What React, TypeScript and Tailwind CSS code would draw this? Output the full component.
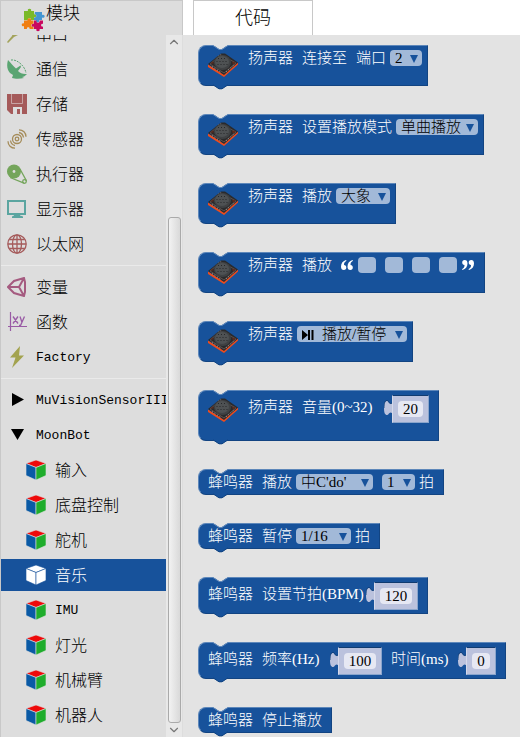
import type { ReactNode } from "react";
import { ChevronDown, ChevronUp } from "lucide-react";

function PuzzleLogo() {
  return (
    <svg className="size-6 shrink-0" viewBox="0 0 24 24" aria-hidden="true">
      <path fill="#7ab929" d="M3 3h4c-1.500-3 4.500-3 3 0h3v3.500c3-1.500 3 4 0 2.500V12h-3c1-2.500-4-2.500-3 0H3z" />
      <path fill="#4496d2" d="M14 4h7v3c3.500-1.500 3.500 4 0 2.500V12h-3c1.500 3-4.500 3-3 0h-2V9.500c3 1 3-4 .5-3z" />
      <path fill="#f07e12" d="M3 12.500h3.500c-1-3 4.500-3 3.500 0h2.500V16c-3-1.500-3 4 0 2.500V21H8.500c1-2.500-3.500-2.500-2.500 0H3v-3C0 19.500 0 14 3 15.500z" />
      <path fill="#c9085f" d="M13 12.500h2.500c-1 3 4 3 3 0H22V16c-2.500-1.500-2.500 3.500 0 2.500V21h-3.500c1.500 3-4.500 3-3 0H13v-2.500c-3 1.500-3-4 0-2.500z" />
    </svg>
  );
}

function SerialIcon() {
  return (
    <svg className="size-5 shrink-0 overflow-visible" viewBox="0 0 20 20" aria-hidden="true">
      <path fill="#a3a35b" d="M20 2v4l-7 4-6 3-6 6-1-1 5-6 2-6z" />
    </svg>
  );
}
function DishIcon() {
  return (
    <svg className="size-5 shrink-0" viewBox="0 0 20 20" aria-hidden="true">
      <path fill="#5aa572" d="M1 1C-.5 6 0 11 3 14l3 2-1 3c3 1 8 1 12 0l-2-1c2 0 3-1 5-3-4 .5-7-1-9-3l3-4-.5-1.500L9 9.500C6 7 4 4 1 1z" />
      <path fill="none" stroke="#5aa572" strokeWidth="1" strokeDasharray="2 1" d="M4 1c6-1 14 6 15 13" />
    </svg>
  );
}
function DiskIcon() {
  return (
    <svg className="size-5 shrink-0" viewBox="0 0 20 20" aria-hidden="true">
      <path fill="#a55a5a" d="M0 0h20v20H4l-4-4z" />
      <path fill="none" stroke="#d0b5b5" strokeWidth=".8" d="M4.500 0v9.500h11V0" />
      <path fill="#ddd" d="M6 20v-7h9v7h-2v-5h-3v5z" />
    </svg>
  );
}
function SensorIcon() {
  return (
    <svg className="size-5 shrink-0" viewBox="0 0 20 20" fill="none" stroke="#a58c5a" strokeWidth="1.300" aria-hidden="true">
      <circle cx="10" cy="10" r="4.500" />
      <circle cx="10" cy="10" r="1.800" />
      <path d="M12 3.500c2.500.5 4 2 4.500 5M12 .8c4 0 7 3 7 7M8 16.500c-2.500-.5-4-2-4.500-5M8 19.200c-4 0-7-3-7-7" />
    </svg>
  );
}
function ActuatorIcon() {
  return (
    <svg className="size-5 shrink-0" viewBox="0 0 20 20" aria-hidden="true">
      <circle cx="7" cy="7.500" r="7" fill="#74a55b" />
      <circle cx="7" cy="7.500" r="1.400" fill="#ddd" />
      <circle cx="17.500" cy="17.500" r="1.800" fill="none" stroke="#74a55b" strokeWidth="1.300" />
      <path fill="none" stroke="#74a55b" strokeWidth="1.300" d="M13 5l6.500 12M3 13.500L17 19.200" />
    </svg>
  );
}
function ScreenIcon() {
  return (
    <svg className="size-5 shrink-0" viewBox="0 0 20 20" aria-hidden="true">
      <path fill="none" stroke="#5ba5a0" strokeWidth="2" d="M1 2h17v13H1z" />
      <path fill="#5ba5a0" d="M7 15h6v1.500l3 1V19H5v-1.500l2-1z" />
    </svg>
  );
}
function GlobeIcon() {
  return (
    <svg className="size-5 shrink-0" viewBox="0 0 20 20" fill="none" stroke="#a55b5b" strokeWidth="1.300" aria-hidden="true">
      <circle cx="10" cy="10" r="9.200" />
      <ellipse cx="10" cy="10" rx="4.500" ry="9.200" />
      <path d="M10 1v18M1 10h18M2.500 5.500h15M2.500 14.500h15" />
    </svg>
  );
}
function VariableIcon() {
  return (
    <svg className="size-5 shrink-0" viewBox="0 0 20 20" fill="none" stroke="#a55b80" strokeWidth="2" aria-hidden="true">
      <path d="M1 10L7 4l10-3 1 4v10l-1 4-10-3zM1 10h11M12 10l5-9M12 10l5 9" />
    </svg>
  );
}
function FunctionIcon() {
  return (
    <svg className="size-5 shrink-0" viewBox="0 0 20 20" aria-hidden="true">
      <path fill="none" stroke="#995ba5" strokeWidth="1.200" d="M3.500 0v19M1 14.500h19" />
      <path fill="none" stroke="#995ba5" strokeWidth="1.300" d="M6 4.500l5 7M11 4.500l-5 7M13 4.500l2 6M17.500 4.500l-4 9H12" />
    </svg>
  );
}
function BoltIcon() {
  return (
    <svg className="size-5 shrink-0 overflow-visible" viewBox="0 0 20 20" aria-hidden="true">
      <path fill="#a3a34f" d="M13 -1L3 10.500h5.500L5 21 17 8.500h-5z" />
    </svg>
  );
}
function RightArrow() {
  return (
    <svg className="size-5 shrink-0" viewBox="0 0 20 20" aria-hidden="true">
      <path d="M5 3l12 6.500L5 16z" />
    </svg>
  );
}
function DownArrow() {
  return (
    <svg className="size-5 shrink-0" viewBox="0 0 20 20" aria-hidden="true">
      <path d="M4 4h13l-6.500 11z" />
    </svg>
  );
}
function CubeIcon({ plain }: { plain?: boolean }) {
  const line = plain ? "#17529b" : "#ddd";
  return (
    <svg className="size-5 shrink-0" viewBox="0 0 20 20" stroke={line} strokeWidth=".6" aria-hidden="true">
      <path fill={plain ? "#fff" : "#ee0a0a"} d="M10 0l10 3.500L10 7.500 0 3.500z" />
      <path fill={plain ? "#fff" : "#0a5aa5"} d="M0 3.500l10 4V20L0 15.500z" />
      <path fill={plain ? "#fff" : "#1fad2c"} d="M20 3.500l-10 4V20l10-4.500z" />
    </svg>
  );
}

type Item = { label: string; icon: ReactNode; child?: boolean; active?: boolean; latin?: boolean; rule?: boolean };

const items: Item[] = [
  { label: "串口", icon: <SerialIcon /> },
  { label: "通信", icon: <DishIcon /> },
  { label: "存储", icon: <DiskIcon /> },
  { label: "传感器", icon: <SensorIcon /> },
  { label: "执行器", icon: <ActuatorIcon /> },
  { label: "显示器", icon: <ScreenIcon /> },
  { label: "以太网", icon: <GlobeIcon /> },
  { label: "变量", icon: <VariableIcon />, rule: true },
  { label: "函数", icon: <FunctionIcon /> },
  { label: "Factory", icon: <BoltIcon />, latin: true },
  { label: "MuVisionSensorIII", icon: <RightArrow />, latin: true, rule: true },
  { label: "MoonBot", icon: <DownArrow />, latin: true },
  { label: "输入", icon: <CubeIcon />, child: true },
  { label: "底盘控制", icon: <CubeIcon />, child: true },
  { label: "舵机", icon: <CubeIcon />, child: true },
  { label: "音乐", icon: <CubeIcon plain />, child: true, active: true },
  { label: "IMU", icon: <CubeIcon />, child: true, latin: true },
  { label: "灯光", icon: <CubeIcon />, child: true },
  { label: "机械臂", icon: <CubeIcon />, child: true },
  { label: "机器人", icon: <CubeIcon />, child: true },
];

function Category({ item }: { item: Item }) {
  return (
    <li className="mb-[3px]">
      {item.rule && <hr className="mt-[5px] mb-[5px] border-[#eaeaea]" />}
      <button
        type="button"
        className={`flex h-8 w-full items-center gap-[9px] overflow-hidden text-left whitespace-nowrap ${item.child ? "pl-[25px]" : "pl-1.5"} ${item.active ? "bg-[#17529b] text-white" : "text-black"} ${item.latin ? "font-['Liberation_Mono','Noto_Sans_CJK_SC',monospace] text-[13px] text-[#333]" : "text-base"}`}
      >
        {item.icon}
        <span className="pt-0.5">{item.label}</span>
      </button>
    </li>
  );
}

function SpeakerModule() {
  return (
    <svg className="mr-2.5 size-[30px] shrink-0" viewBox="0 0 30 30" role="img" aria-label="扬声器模块">
      <path fill="#ee4c1c" d="M0 14.500L15 24 30 12.500v2L16 27 0 17z" />
      <path fill="#2a2a2c" d="M0 14L13 3.500h4L30 12.500 16 25z" />
      <path fill="none" stroke="#6b5a56" strokeWidth=".8" d="M2 14L13 5l15 8L16 23z" />
      <path fill="none" stroke="#bbb" strokeWidth=".8" strokeDasharray="1 2" d="M4 16.500l9 6M18 22l9-8M10 6.500l3-2" />
      <ellipse cx="14.500" cy="12.500" rx="8.500" ry="7.500" fill="#3f4143" />
      <ellipse cx="14" cy="12" rx="7" ry="6" fill="#4e5153" />
      <path fill="none" stroke="#26282a" strokeDasharray="1 2" d="M10 8.500h9M8.500 11.500h12M9.500 14.500h10" />
      <path fill="#5f2a1d" d="M24 11.500l4 1-3 2zM2 13.500l3-2 1 2z" />
    </svg>
  );
}

function Block({ children, size = "h-[26px]" }: { children: ReactNode; size?: string }) {
  return (
    <div
      className={`relative flex w-fit items-start rounded-l-lg border border-t-[#5d87ba] border-r-[#124482] border-b-[#124482] border-l-[#5d87ba] bg-[#17529b] pt-1 pl-[9px] whitespace-nowrap text-white ${size}`}
    >
      <svg className="absolute top-[-1px] left-3.5 h-[6px] w-4" viewBox="0 0 16 6" aria-hidden="true">
        <path fill="#e3e3e3" d="M0 0l6 4h3l6-4z" />
        <path fill="none" stroke="#5d87ba" d="M0 .5l6 4h3l6-4" />
      </svg>
      <svg className="absolute bottom-[-5px] left-3.5 h-[6px] w-4" viewBox="0 0 16 6" aria-hidden="true">
        <path fill="#17529b" d="M0 0h15v1L9 5H6L0 1z" />
        <path fill="none" stroke="#124482" d="M0 .8l6 4h3l6-4" />
      </svg>
      {children}
    </div>
  );
}

function Label({ children, low, width = "" }: { children: ReactNode; low?: boolean; width?: string }) {
  return <span className={`shrink-0 leading-4 ${low ? "mt-1" : ""} ${width}`}>{children}</span>;
}

function Dropdown({ value, name, width, icon }: { value: string; name: string; width: string; icon?: boolean }) {
  return (
    <span className={`relative shrink-0 ${width}`}>
      <select
        aria-label={name}
        defaultValue={value}
        className={`block h-4 w-full appearance-none rounded-[4px] bg-[#a2b9d8] leading-4 text-black ${icon ? "pl-[25px]" : "pl-[5px]"}`}
      >
        <option>{value}</option>
      </select>
      {icon && (
        <svg className="pointer-events-none absolute top-1 left-[5px] h-2.5 w-3" viewBox="0 0 12 10" aria-hidden="true">
          <path d="M0 0l6 5-6 5zM6 0h2v10H6zM9.500 0h2v10h-2z" />
        </svg>
      )}
      <svg className="pointer-events-none absolute top-[5px] right-1 h-2 w-2" viewBox="0 0 8 8" aria-hidden="true">
        <path fill="#17529b" d="M0 0h8L4 8z" />
      </svg>
    </span>
  );
}

function NumberValue({ value, name, width }: { value: string; name: string; width: string }) {
  return (
    <span className="flex shrink-0 items-start">
      <svg className="mt-[5px] h-4 w-2" viewBox="0 0 8 16" aria-hidden="true">
        <path fill="#bbc2dd" d="M8 3.500C5 5 5 1 3 1S0 3 0 8s1 7 3 7 2-4 5-2z" />
        <path fill="none" stroke="#103b70" strokeWidth=".8" d="M8 3C5 5 5 .5 3 .5S0 3 0 8" />
      </svg>
      <span className="flex h-7 border border-t-[#103b70] border-r-[#8aa5cc] border-b-[#8aa5cc] border-l-[#d5d9ea] bg-[#bbc2dd] px-[5px] pt-[5px]">
        <input
          aria-label={name}
          defaultValue={value}
          className={`block h-4 rounded-[4px] bg-[#e6e8f3] text-center text-black ${width}`}
        />
      </span>
    </span>
  );
}

function Quote({ close }: { close?: boolean }) {
  return (
    <svg className={`mt-[3px] h-2.5 w-3 shrink-0 ${close ? "rotate-180" : ""}`} viewBox="0 0 12 10" fill="#fff" aria-hidden="true">
      <path d="M5 0C2 1 0 3 0 6.500 0 9 1 10 2.800 10S5.300 9 5.300 7.500 4.500 5 3 5C3 3 3.500 2 5.500.8zM11.500 0c-3 1-5 3-5 6.500C6.500 9 7.500 10 9.300 10s2.500-1 2.500-2.500S11 5 9.500 5c0-2 .5-3 2.500-4.200z" />
    </svg>
  );
}

const speaker = "h-[41px]";
const numeric = "h-[37px]";

function Workspace() {
  return (
    <section className="flex min-w-0 flex-1 flex-col gap-7 overflow-hidden bg-[#e3e3e3] pt-2.5 pl-[15px] text-[15px]" aria-label="代码">
      <Block size={speaker}>
        <SpeakerModule />
        <div className="flex gap-[9px]">
          <Label>扬声器</Label>
          <Label>连接至</Label>
          <Label>端口</Label>
        </div>
        <div className="ml-1 mr-[5px] flex"><Dropdown name="端口" value="2" width="w-8" /></div>
      </Block>
      <Block size={speaker}>
        <SpeakerModule />
        <div className="flex gap-[9px]">
          <Label>扬声器</Label>
          <Label>设置播放模式</Label>
        </div>
        <div className="ml-1 mr-[5px] flex"><Dropdown name="播放模式" value="单曲播放" width="w-[82px]" /></div>
      </Block>
      <Block size={speaker}>
        <SpeakerModule />
        <div className="flex gap-[9px]">
          <Label>扬声器</Label>
          <Label>播放</Label>
        </div>
        <div className="ml-1 mr-[5px] flex"><Dropdown name="播放" value="大象" width="w-[54px]" /></div>
      </Block>
      <Block size={speaker}>
        <SpeakerModule />
        <div className="mr-2.5 flex gap-[9px]">
          <Label>扬声器</Label>
          <Label>播放</Label>
          <div className="flex gap-[5px]">
            <Quote />
            <div className="flex gap-[9px]">
              {[1, 2, 3, 4].map((n) => (
                <input key={n} aria-label={`字符 ${n}`} className="h-4 w-[18px] rounded-[4px] bg-[#a2b9d8] text-center text-black" />
              ))}
            </div>
            <Quote close />
          </div>
        </div>
      </Block>
      <Block size={speaker}>
        <SpeakerModule />
        <Label>扬声器</Label>
        <div className="ml-1 mr-[5px] flex"><Dropdown name="控制" value="播放/暂停" width="w-[110px]" icon /></div>
      </Block>
      <Block size="h-[51px]">
        <SpeakerModule />
        <div className="mr-[9px] flex">
          <Label low width="w-[54px]">扬声器</Label>
          <Label low width="w-[82px]">音量(0~32)</Label>
          <NumberValue name="音量" value="20" width="w-[25px]" />
        </div>
      </Block>
      <Block>
        <div className="flex gap-[9px]">
          <Label>蜂鸣器</Label>
          <Label>播放</Label>
        </div>
        <div className="ml-1 mr-[9px] flex gap-[9px]">
          <Dropdown name="音符" value="中C'do'" width="w-[77px]" />
          <div className="flex gap-1">
            <Dropdown name="节拍" value="1" width="w-[33px]" />
            <Label>拍</Label>
          </div>
        </div>
      </Block>
      <Block>
        <div className="flex gap-[9px]">
          <Label>蜂鸣器</Label>
          <Label>暂停</Label>
        </div>
        <div className="ml-1 mr-[9px] flex gap-1">
          <Dropdown name="暂停节拍" value="1/16" width="w-[55px]" />
          <Label>拍</Label>
        </div>
      </Block>
      <Block size={numeric}>
        <div className="mr-[9px] flex">
          <Label low width="w-[54px]">蜂鸣器</Label>
          <Label low width="w-[104px]">设置节拍(BPM)</Label>
          <NumberValue name="节拍 (BPM)" value="120" width="w-8" />
        </div>
      </Block>
      <Block size={numeric}>
        <div className="mr-[9px] flex">
          <Label low width="w-[54px]">蜂鸣器</Label>
          <Label low width="w-[68px]">频率(Hz)</Label>
          <NumberValue name="频率 (Hz)" value="100" width="w-8" />
          <div className="ml-[9px] flex">
            <Label low width="w-[67px]">时间(ms)</Label>
            <NumberValue name="时间 (ms)" value="0" width="w-[18px]" />
          </div>
        </div>
      </Block>
      <Block>
        <div className="mr-[9px] flex gap-[9px]">
          <Label>蜂鸣器</Label>
          <Label>停止播放</Label>
        </div>
      </Block>
    </section>
  );
}

export default function App() {
  return (
    <div className="flex h-screen flex-col overflow-hidden bg-white font-['Liberation_Serif','Noto_Sans_CJK_SC',serif] font-light text-black">
      <header className="flex h-[35px] shrink-0">
        <div className="flex w-[183px] items-start gap-px border border-b-0 border-[#c8c8c8] bg-[#ddd] pl-5 pt-[7px]">
          <PuzzleLogo />
          <h1 className="-mt-2 text-[17px] leading-7">模块</h1>
        </div>
        <button type="button" className="ml-2.5 w-[120px] border border-b-0 border-[#c8c8c8] bg-white text-lg">
          代码
        </button>
      </header>
      <main className="flex min-h-0 flex-1">
        <nav className="flex w-[183px] shrink-0 overflow-hidden border-x border-l-[#c8c8c8] border-r-[#ddd] bg-[#ddd]" aria-label="模块">
          <ul className="-mt-[17px] min-w-0 flex-1">
            {items.map((item) => (
              <Category key={item.label} item={item} />
            ))}
          </ul>
          <div className="flex w-4 flex-col items-center bg-[#e8e8e8]">
            <button type="button" aria-label="向上滚动" className="flex h-3.5 items-center">
              <ChevronUp className="size-3.5 text-[#777]" />
            </button>
            <div className="mt-[168px] w-[13px] flex-1 rounded-[3px] border border-[#aaa] bg-linear-to-r from-[#f2f2f2] to-[#d9d9d9]" />
            <button type="button" aria-label="向下滚动" className="flex h-3.5 items-center">
              <ChevronDown className="size-3.5 text-[#777]" />
            </button>
          </div>
        </nav>
        <Workspace />
      </main>
    </div>
  );
}
